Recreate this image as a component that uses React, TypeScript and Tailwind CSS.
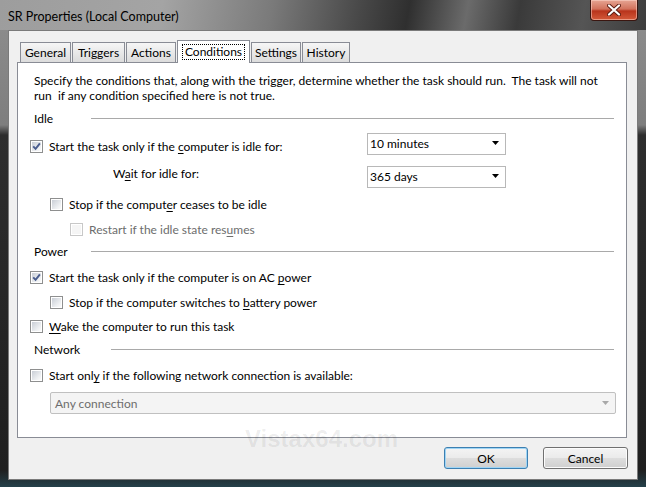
import type { ReactNode } from 'react';

const Check = ({ checked = false, disabled = false }: { checked?: boolean; disabled?: boolean }) => (
  <span
    className={`flex h-[13px] w-[13px] shrink-0 items-center justify-center border bg-white ${
      disabled ? 'border-[#c8c8c8]' : 'border-[#8e8f8f]'
    }`}
  >
    <span
      className={`relative flex h-[9px] w-[9px] items-center justify-center ${
        disabled ? 'bg-[#f5f5f5]' : 'bg-[linear-gradient(135deg,#c9ced6,#eef0f2_70%,#fbfbfb)]'
      }`}
    >
      {checked && (
        <svg viewBox="0 0 9 9" className="absolute left-0 top-0 h-[9px] w-[9px]">
          <path d="M1.2 4.3 L3.6 6.9 L7.9 1.3" fill="none" stroke="#4a5d8e" strokeWidth="1.9" />
        </svg>
      )}
    </span>
  </span>
);

const U = ({ children }: { children: ReactNode }) => (
  <span className="underline decoration-1 underline-offset-[2px]">{children}</span>
);

const CheckRow = ({
  indent,
  checked,
  disabled,
  mt,
  children,
}: {
  indent: string;
  checked?: boolean;
  disabled?: boolean;
  mt: string;
  children: ReactNode;
}) => (
  <div className={`flex h-[13px] items-center gap-[6px] ${indent} ${mt}`}>
    <Check checked={checked} disabled={disabled} />
    <span className={disabled ? 'text-[#6d6d6d]' : 'text-black'}>{children}</span>
  </div>
);

const Section = ({ label, labelWidth, mt }: { label: string; labelWidth: string; mt: string }) => (
  <div className={`flex h-[15px] items-center pl-[16px] pr-[12px] ${mt}`}>
    <span className={`${labelWidth} shrink-0`}>{label}</span>
    <span className="h-px flex-1 bg-[#a9a9a9]" />
  </div>
);

const Arrow = ({ color = '#000' }: { color?: string }) => (
  <svg width="7" height="4" viewBox="0 0 7 4">
    <path d="M0 0 H7 L3.5 4 Z" fill={color} />
  </svg>
);

const Combo = ({ value }: { value: string }) => (
  <div className="flex h-[22px] w-[139px] items-center justify-between border border-[#b8b8b8] bg-white pb-[2px] pl-[2px] pr-[6px]">
    <span>{value}</span>
    <Arrow />
  </div>
);

const tabs = [
  { name: 'General', w: 'w-[51px]' },
  { name: 'Triggers', w: 'w-[53px]' },
  { name: 'Actions', w: 'w-[50px]' },
  { name: 'Conditions', w: 'w-[73px]', active: true },
  { name: 'Settings', w: 'w-[50px]' },
  { name: 'History', w: 'w-[48px]' },
];

const Button = ({ label, primary }: { label: string; primary?: boolean }) => (
  <button
    className={`flex h-[22px] items-center justify-center rounded-[3px] border bg-[linear-gradient(to_bottom,#f4f4f4,#ebebeb_48%,#dddddd_52%,#cfcfcf)] text-black ${
      primary ? 'w-[84px] border-[#3c7fb1] shadow-[inset_0_0_0_1px_#9fd5f5]' : 'w-[85px] border-[#707070] shadow-[inset_0_0_0_1px_#fcfcfc]'
    }`}
  >
    {label}
  </button>
);

export default function App() {
  return (
    <div className="relative flex h-[487px] w-[646px] flex-col overflow-hidden bg-[linear-gradient(to_bottom,#8f8f8f_0px,#7e7e7e_125px,#2e2e2e_135px,#1f1f1f_470px,#24404a_487px)] font-['Lato','Noto_Sans',sans-serif] text-[12px] leading-[15px] text-black">
      {/* title bar */}
      <div className="flex h-[30px] shrink-0 items-start justify-between bg-[linear-gradient(100deg,#9d9d9d_0%,#a4a4a4_25%,#7a7a7a_42%,#4a4a4a_55%,#2f2f2f_63%,#6b6b6b_72%,#3a3a3a_80%,#555555_90%,#3d3d3d_100%)] pl-[8px] pr-[8px]">
        <span className="pt-[9px] text-[12.5px]">SR Properties (Local Computer)</span>
        <div className="flex h-[21px] w-[48px] items-center justify-center rounded-b-[4px] border border-t-0 border-[#3a1610] bg-[linear-gradient(to_bottom,#e6a593,#d2725c_45%,#b8341c_55%,#d45a3a)] shadow-[inset_0_0_0_1px_rgba(255,220,210,0.5)]">
          <svg width="14" height="12" viewBox="0 0 14 12">
            <path d="M2 1.5 L12 10.5 M12 1.5 L2 10.5" stroke="#5a1a10" strokeWidth="4" strokeLinecap="round" />
            <path d="M2 1.5 L12 10.5 M12 1.5 L2 10.5" stroke="#ffffff" strokeWidth="2.2" strokeLinecap="round" />
          </svg>
        </div>
      </div>

      {/* client */}
      <div className="flex flex-1 px-[8px] pb-[7px]">
        <div className="flex flex-1 flex-col border border-[#7a7a7a] bg-[#f0f0f0] pl-[8px] pr-[9px] pt-[9px]">
          {/* tabs */}
          <div className="flex h-[22px] items-end pl-[3px]">
            {tabs.map((t, i) => (
              <div
                key={t.name}
                className={`${t.w} ${i > 0 ? 'ml-[1px]' : ''} flex items-center justify-center border border-b-0 border-[#898c95] ${
                  t.active
                    ? 'relative z-10 -mb-px h-[23px] bg-white'
                    : 'h-[20px] bg-[linear-gradient(to_bottom,#f6f6f6,#e9e9e9_50%,#dcdcdc)]'
                }`}
              >
                {t.active ? (
                  <span className="border border-dotted border-black px-[2px] leading-[14px]">{t.name}</span>
                ) : (
                  <span>{t.name}</span>
                )}
              </div>
            ))}
          </div>

          {/* panel */}
          <div className="flex h-[376px] w-[610px] flex-col border border-[#898c95] bg-white pt-[10px]">
            <p className="pl-[16px] pr-[12px]">
              Specify the conditions that, along with the trigger, determine whether the task should run.&nbsp; The task will not
              <br />
              run&nbsp; if any condition specified here is not true.
            </p>

            <Section label="Idle" labelWidth="w-[57px]" mt="mt-[8px]" />

            <div className="mt-[7px] flex h-[22px] items-start pl-[12px]">
              <div className="mt-[7px] flex h-[13px] w-[337px] items-center gap-[6px]">
                <Check checked />
                <span>
                  Start the task only if the <U>c</U>omputer is idle for:
                </span>
              </div>
              <Combo value="10 minutes" />
            </div>

            <div className="mt-[11px] flex h-[22px] items-start pl-[95px]">
              <span className="w-[254px]">
                W<U>a</U>it for idle for:
              </span>
              <Combo value="365 days" />
            </div>

            <CheckRow indent="pl-[32px]" mt="mt-[10px]">
              Stop if the comput<U>e</U>r ceases to be idle
            </CheckRow>
            <CheckRow indent="pl-[52px]" mt="mt-[12px]" disabled>
              Restart if the idle state res<U>u</U>mes
            </CheckRow>

            <Section label="Power" labelWidth="w-[57px]" mt="mt-[8px]" />

            <CheckRow indent="pl-[12px]" mt="mt-[12px]" checked>
              Start the task only if the computer is on AC <U>p</U>ower
            </CheckRow>
            <CheckRow indent="pl-[32px]" mt="mt-[12px]">
              Stop if the computer switches to <U>b</U>attery power
            </CheckRow>
            <CheckRow indent="pl-[12px]" mt="mt-[11px]">
              <U>W</U>ake the computer to run this task
            </CheckRow>

            <Section label="Network" labelWidth="w-[77px]" mt="mt-[9px]" />

            <CheckRow indent="pl-[12px]" mt="mt-[12px]">
              Start onl<U>y</U> if the following network connection is available:
            </CheckRow>

            <div className="ml-[32px] mr-[10px] mt-[10px] flex h-[22px] items-center justify-between rounded-[2px] border border-[#c0c0c0] bg-[#f4f4f4] pl-[4px] pr-[6px] text-[#6d6d6d]">
              <span>Any connection</span>
              <Arrow color="#a8a8a8" />
            </div>
          </div>

          {/* buttons */}
          <div className="mt-[9px] flex justify-end gap-[15px]">
            <Button label="OK" primary />
            <Button label="Cancel" />
          </div>
        </div>
      </div>

      {/* watermark */}
      <span className="absolute left-[245px] top-[425px] font-['Liberation_Sans',sans-serif] text-[24px] font-bold leading-[28px] text-black/[0.07]">
        Vistax64.com
      </span>
    </div>
  );
}
